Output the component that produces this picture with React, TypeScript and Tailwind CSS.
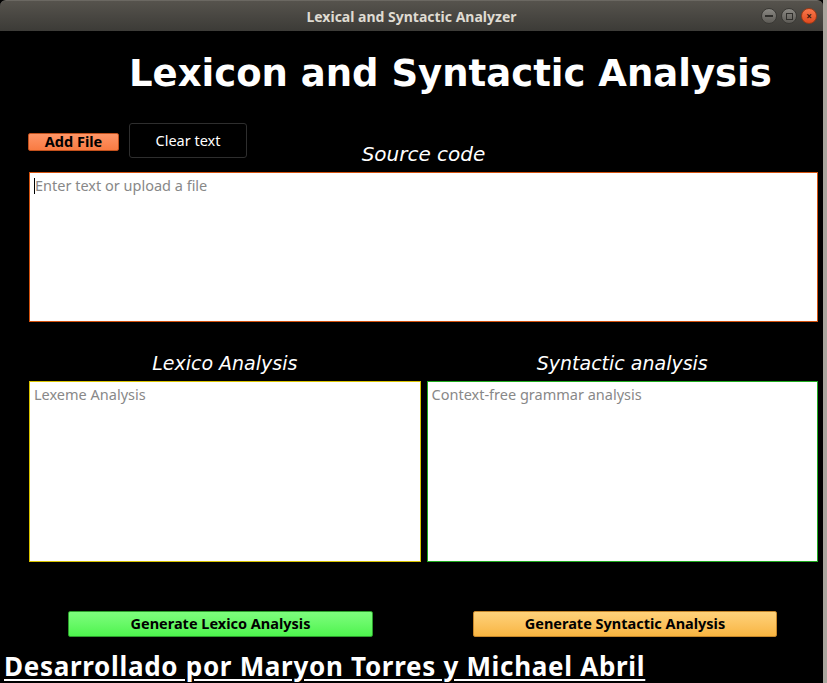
import React from "react";

const UI = "font-['Noto_Sans','DejaVu_Sans',sans-serif]";
const DV = "font-['DejaVu_Sans',sans-serif]";

function WindowButtons() {
  return (
    <div className="flex items-center gap-[4px]">
      <div className="w-[16px] h-[16px] rounded-full bg-gradient-to-b from-[#8a8883] to-[#5d5b56] border border-[#3a3935] flex items-center justify-center">
        <div className="w-[8px] h-[1.5px] bg-[#2f2e2b]" />
      </div>
      <div className="w-[16px] h-[16px] rounded-full bg-gradient-to-b from-[#8a8883] to-[#5d5b56] border border-[#3a3935] flex items-center justify-center">
        <div className="w-[7px] h-[7px] border border-[#2f2e2b]" />
      </div>
      <div className="w-[16px] h-[16px] rounded-full bg-gradient-to-b from-[#f9774a] to-[#e0491d] border border-[#9c3a16] flex items-center justify-center text-[10px] leading-none text-[#3a1a0c] font-bold">
        ×
      </div>
    </div>
  );
}

export default function App() {
  return (
    <div className="w-[827px] h-[683px] flex bg-[#a9a59d] overflow-hidden">
      <div className="w-[823px] h-full flex flex-col bg-black">
        <div className="h-[31px] shrink-0 flex items-center relative bg-gradient-to-b from-[#56534d] to-[#3c3b37] rounded-t-[6px] border-t border-[#6b6862]">
          <div className={`flex-1 text-center text-[14px] font-bold text-[#dfdbd2] ${UI}`}>
            Lexical and Syntactic Analyzer
          </div>
          <div className="absolute right-[6px] top-[7px]">
            <WindowButtons />
          </div>
        </div>

        <div className="pl-[129px] pt-[20px]">
          <h1 className={`text-[37px] leading-[46px] font-bold text-white ${DV}`}>
            Lexicon and Syntactic Analysis
          </h1>
        </div>

        <div className="pl-[29px] w-[818px]">
          <div className="grid grid-cols-[1fr_auto_1fr] mt-[24px] h-[51px]">
            <div className="flex items-center gap-[10px] -ml-[1px] pb-[12px]">
              <button className={`w-[91px] h-[18px] mt-[2px] rounded-[2px] bg-gradient-to-b from-[#ff9566] to-[#f97b42] border border-[#c2511d] text-[14.5px] leading-none font-bold text-black ${UI}`}>
                Add File
              </button>
              <button className={`w-[118px] h-[35px] rounded-[3px] bg-black border border-[#2e2e2e] text-[14.5px] text-white ${UI}`}>
                Clear text
              </button>
            </div>
            <div className={`self-end pb-[8px] text-[20px] leading-none italic text-white ${DV}`}>
              Source code
            </div>
            <div />
          </div>

          <div className="h-[150px] bg-white border border-[#d4520e] pl-[4px] pt-[2px]">
            <div className={`flex items-center text-[14.5px] text-[#888] ${UI}`}>
              <span className="w-[1px] h-[16px] bg-black" />
              Enter text or upload a file
            </div>
          </div>

          <div className="grid grid-cols-2 gap-[6px] mt-[32px]">
            <div className="flex flex-col">
              <div className={`text-center text-[19px] leading-none italic text-white pb-[8px] ${DV}`}>
                Lexico Analysis
              </div>
              <div className="h-[181px] bg-white border border-[#d8c300] pl-[4px] pt-[2px]">
                <div className={`text-[14.5px] text-[#888] ${UI}`}>Lexeme Analysis</div>
              </div>
            </div>
            <div className="flex flex-col">
              <div className={`text-center text-[19px] leading-none italic text-white pb-[8px] ${DV}`}>
                Syntactic analysis
              </div>
              <div className="h-[181px] bg-white border border-[#1eaa1e] pl-[4px] pt-[2px]">
                <div className={`text-[14.5px] text-[#888] ${UI}`}>Context-free grammar analysis</div>
              </div>
            </div>
          </div>
        </div>

        <div className="flex mt-[49px]">
          <button className={`ml-[68px] w-[305px] h-[26px] rounded-[2px] bg-gradient-to-b from-[#7dfd7d] to-[#4df44d] border border-[#2b9e2b] text-[14.5px] font-bold text-black ${UI}`}>
            Generate Lexico Analysis
          </button>
          <button className={`ml-[100px] w-[304px] h-[26px] rounded-[2px] bg-gradient-to-b from-[#ffd27a] to-[#f8b540] border border-[#c5862a] text-[14.5px] font-bold text-black ${UI}`}>
            Generate Syntactic Analysis
          </button>
        </div>

        <div className={`pl-[4px] mt-[14px] text-[26px] leading-[30px] tracking-[0.7px] font-bold text-white underline underline-offset-[3px] ${UI}`}>
          Desarrollado por Maryon Torres y Michael Abril
        </div>
      </div>
      <div className="flex-1" />
    </div>
  );
}
